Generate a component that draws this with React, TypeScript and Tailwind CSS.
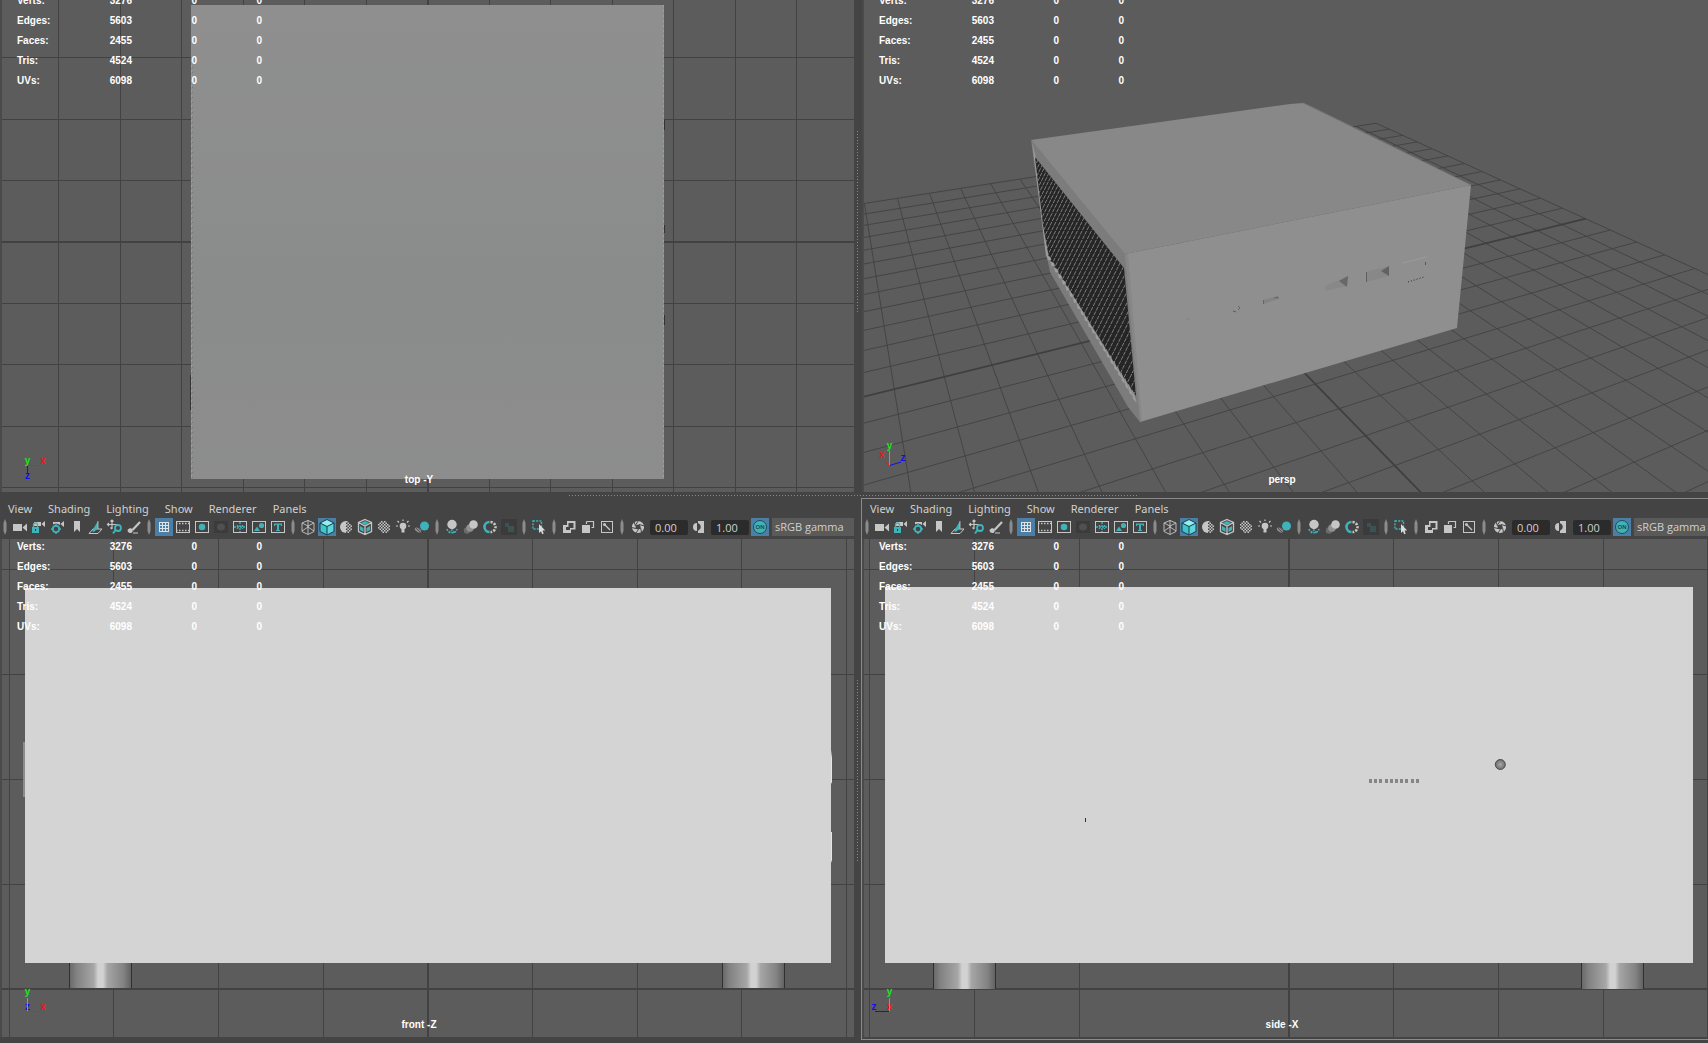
import React from "react";

const LINE = "#424242";
const GRAY = "#c6c6c6";
const TEAL = "#3fb3b9";

/* ---------- toolbar icons (18 x 18) ---------- */

function Cube({ solid, textured }: { solid?: boolean; textured?: boolean }) {
  if (solid)
    return (
      <>
        <path d="M9 1.5 16 5 9 8.5 2 5Z" fill="#8ff0f0" />
        <path d="M2 5 9 8.5V17L2 13.5Z" fill="#3fc3cc" />
        <path d="M16 5 9 8.5V17l7-3.5Z" fill="#5ad6dc" />
        <path d="M9 1.5 16 5v8.5L9 17 2 13.5V5ZM2 5l7 3.5L16 5M9 8.500V17" fill="none" stroke="#1f3b45" />
      </>
    );
  return (
    <>
      {textured && <path d="M9 3 13 5 9 7 5 5ZM4 8l3.500 2v4L4 12ZM14 8l-3.500 2v4L14 12Z" fill={TEAL} />}
      <path
        d={
          textured
            ? "M9 1.500 15.500 4.500v9L9 16.500 2.500 13.500v-9ZM2.500 4.500 9 8l6.500-3.500M9 8v8.500"
            : "M9 2.500 15 5v8.500l-6 3-6-3V5ZM3 5l6 3 6-3M9 8v8M9 2v7M3 13l6-4 6 4"
        }
        fill="none"
        stroke={GRAY}
        strokeWidth={textured ? 1.3 : 0.9}
      />
    </>
  );
}

const frame = <rect x="2.500" y="3.500" width="13" height="11" fill="none" stroke={GRAY} />;
const smallCam = <path d="M4 4h7v4H4ZM11.500 6 15 3v6Z" fill={GRAY} />;

const checks = Array.from({ length: 64 }, (_, i) => [i % 8, Math.floor(i / 8)])
  .filter(([c, r]) => (c + r) % 2 === 0 && Math.hypot(c - 3.5, r - 3.5) < 4.3)
  .map(([c, r]) => `M${3 + c * 1.5} ${3 + r * 1.5}h1.5v1.5h-1.5Z`)
  .join("");

const halfChecks = Array.from({ length: 32 }, (_, i) => [i % 4, Math.floor(i / 4)])
  .filter(([c, r]) => (c + r) % 2 === 0 && Math.hypot(c + 0.5, r - 3.5) < 4.3)
  .map(([c, r]) => `M${9 + c * 1.5} ${3 + r * 1.5}h1.5v1.5h-1.5Z`)
  .join("");

const icons: Record<string, React.ReactNode> = {
  camera: <path d="M2 6h9v7H2ZM11.500 9.500 16 5.500v8Z" fill={GRAY} />,
  lock: (
    <>
      {smallCam}
      <path d="M2 9h7v6H2Z" fill={TEAL} />
      <path d="M3.500 9V7a2 2 0 0 1 4 0v2" fill="none" stroke={TEAL} strokeWidth="1.300" />
      <path d="M5 11h1v2H5Z" fill="#333" />
    </>
  ),
  attributes: (
    <>
      {smallCam}
      <circle cx="7" cy="11" r="4.500" fill="none" stroke="#444" strokeWidth="2" />
      <circle cx="7" cy="11" r="3.200" fill="none" stroke={TEAL} strokeWidth="1.800" />
      <path d="M7 6v2M7 14v2M2 11h2M10 11h2" stroke={TEAL} strokeWidth="1.500" />
    </>
  ),
  bookmark: <path d="M6 3h6v11l-3-3-3 3Z" fill={GRAY} />,
  plane: (
    <>
      <path d="M2 15.500 6 11h9l-4 4.500Z" fill="none" stroke={GRAY} />
      <path d="M5 13 11 3v7l-4 4Z" fill={TEAL} />
      <path d="M11 3v8" stroke={GRAY} strokeWidth=".8" />
    </>
  ),
  panzoom: (
    <>
      <path d="M6 2v9M1.500 6.500H11M4.500 3.500 6 2l1.500 1.500M3 5 1.500 6.500 3 8M4.500 9.500 6 11" fill="none" stroke={GRAY} strokeWidth="1.200" />
      <circle cx="12" cy="10" r="3" fill="#444" stroke={TEAL} strokeWidth="1.800" />
      <path d="M9.500 12 7 15.500" stroke={TEAL} strokeWidth="2" />
    </>
  ),
  brush: (
    <>
      <path d="M15 4 7.500 12" stroke={GRAY} strokeWidth="2.200" />
      <path d="M2.500 12c3-4 7 0 4.500 2.500-2 1.500-4.500 0-4.500-2.500Z" fill={GRAY} />
      <path d="M8 15h5" stroke={GRAY} />
    </>
  ),
  grid: (
    <path d="M4.500 4.500h9v9h-9ZM7.500 4v10M10.500 4v10M4 7.500h10M4 10.500h10" fill="none" stroke="#e2e2e2" shapeRendering="crispEdges" />
  ),
  film: (
    <>
      <rect x="2.500" y="3.500" width="13" height="11" fill="none" stroke={GRAY} />
      <path d="M2 5.500h14M2 12.500h14" stroke={GRAY} strokeWidth="1.500" strokeDasharray="1.500 1.500" />
    </>
  ),
  gate: (
    <>
      {frame}
      <circle cx="9" cy="9" r="3.300" fill={TEAL} />
    </>
  ),
  mask: (
    <>
      <rect x="2" y="3" width="14" height="12" fill="#3b3b3b" />
      <ellipse cx="9" cy="9" rx="4" ry="3.500" fill="#505050" />
    </>
  ),
  fieldchart: (
    <>
      {frame}
      <path d="M3 9h12M9 4v10M6.500 7v4M11.500 7v4" stroke={TEAL} strokeWidth="1.400" strokeDasharray="2 1" />
    </>
  ),
  safeaction: (
    <>
      {frame}
      <circle cx="11.500" cy="7.500" r="2.600" fill={TEAL} />
      <path d="M4 13 7 8.500l3 4.500Z" fill={TEAL} />
    </>
  ),
  safetitle: (
    <>
      {frame}
      <path d="M5 5.500h8V8h-1l-.5-1.200H10V12h1v1H7v-1h1V6.800H6.500L6 8H5Z" fill={TEAL} />
    </>
  ),
  wire: <Cube />,
  solid: <Cube solid />,
  textured: <Cube textured />,
  half: (
    <>
      <path d="M9 3a6 6 0 0 0 0 12Z" fill={GRAY} />
      <path d={halfChecks} fill={GRAY} />
    </>
  ),
  checker: <path d={checks} fill={GRAY} />,
  light: (
    <>
      <circle cx="9" cy="8" r="3.300" fill={GRAY} />
      <path d="M7.500 10h3v4.500h-3Z" fill={GRAY} />
      <path d="M2 8h2M14 8h2M3.500 3 5 4.500M14.500 3 13 4.500M9 1.500V3" stroke={GRAY} strokeWidth="1.200" />
    </>
  ),
  shadow: (
    <>
      <ellipse cx="5" cy="12" rx="3.500" ry="2" fill="#8b8b8b" transform="rotate(30 5 12)" />
      <path d="M3 10l4 4M5 9.500l3 3" stroke="#555" />
      <circle cx="11.500" cy="8" r="4.500" fill={TEAL} />
    </>
  ),
  occlusion: (
    <>
      <path d="M4 11c1 5 9 5 10 0M6 15l3-3 3 3" fill="none" stroke={TEAL} strokeWidth="1.500" strokeDasharray="2 1" />
      <circle cx="9" cy="6.500" r="4.700" fill={GRAY} />
    </>
  ),
  motion: (
    <>
      <circle cx="5" cy="12.500" r="3.200" fill="#6a6a6a" />
      <circle cx="8" cy="10" r="3.800" fill="#909090" />
      <circle cx="11.500" cy="6.500" r="4.300" fill={GRAY} />
    </>
  ),
  aliasing: (
    <>
      <path d="M8.500 4a5 5 0 0 0 0 10" fill="none" stroke={TEAL} strokeWidth="2.600" />
      <path d="M9.500 4a5 5 0 0 1 0 10" fill="none" stroke={GRAY} strokeWidth="2.600" strokeDasharray="2.200 1.200" />
    </>
  ),
  dof: (
    <>
      <rect x="1" y="1" width="16" height="16" fill="#3b3b3b" />
      <path d="M5 5h4v3h5v6H8V9H5Z" fill="#3d5252" />
    </>
  ),
  isolate: (
    <>
      <rect x="3" y="3" width="8.500" height="8" fill="none" stroke={TEAL} strokeWidth="1.400" strokeDasharray="2 1.200" />
      <path d="M9 6v9l2-1.800 1.200 3 1.500-.6-1.200-3h2.700Z" fill="#dcdcdc" />
    </>
  ),
  xray: (
    <>
      <path d="M3 7h8v8H3Z" fill={GRAY} />
      <rect x="7" y="3" width="8.500" height="8.500" fill={GRAY} />
      <path d="M8.500 5h5v5h-5Z" fill="#444" />
      <path d="M6 9h4v3H6Z" fill="#444" />
    </>
  ),
  xrayjoint: (
    <>
      <path d="M7.500 3.500h7v6h-2M7.500 3.500V6" fill="none" stroke={GRAY} strokeWidth="1.200" />
      <rect x="3" y="7" width="8" height="8" fill={GRAY} />
    </>
  ),
  exposurebox: (
    <>
      <rect x="3.500" y="3.500" width="11" height="11" fill="none" stroke={GRAY} />
      <path d="M6 6l6 6" stroke={GRAY} strokeWidth="1.300" />
      <circle cx="6.500" cy="6.500" r="1.500" fill={GRAY} />
    </>
  ),
  aperture: (
    <>
      <circle cx="9" cy="9" r="4.300" fill="none" stroke={GRAY} strokeWidth="3.600" />
      <path d="M9.500 2.500 6.500 7M15.500 8 10 6.500M12.500 14.500 11.500 9.500M6.500 15.500 9.500 11.500M2.500 9.500 7 10.500M5 3.500 6.500 8" stroke="#444" strokeWidth="1" />
    </>
  ),
  contrast: (
    <>
      <path d="M7 5a4 4 0 0 0 0 8Z" fill={GRAY} />
      <path d="M8 3h6v12H8v-2.200a4 4 0 0 0 0-7.600Z" fill={GRAY} />
    </>
  ),
};

function Tool({ name, label, active }: { name: string; label: string; active?: boolean }) {
  return (
    <button
      type="button"
      aria-label={label}
      aria-pressed={active}
      className={active ? "mr-px h-[18px] w-[18px] shrink-0 bg-[#4c7fa5]" : "mr-px h-[18px] w-[18px] shrink-0"}
    >
      <svg viewBox="0 0 18 18" className="block size-full">
        {icons[name]}
      </svg>
    </button>
  );
}

function Sep() {
  return (
    <svg viewBox="0 0 11 18" className="h-[18px] w-[11px] shrink-0" aria-hidden="true">
      <path d="M5 1 6.500 5v8L5 17 3.500 13V5Z" fill="#8c8c8c" />
    </svg>
  );
}

const groups: [string, string, boolean?][][] = [
  [
    ["camera", "Select camera"],
    ["lock", "Lock camera"],
    ["attributes", "Camera attributes"],
    ["bookmark", "Bookmarks"],
    ["plane", "Image plane"],
    ["panzoom", "2D pan/zoom"],
    ["brush", "Grease pencil"],
  ],
  [
    ["grid", "Grid", true],
    ["film", "Film gate"],
    ["gate", "Resolution gate"],
    ["mask", "Gate mask"],
    ["fieldchart", "Field chart"],
    ["safeaction", "Safe action"],
    ["safetitle", "Safe title"],
  ],
  [
    ["wire", "Wireframe"],
    ["solid", "Smooth shade all", true],
    ["half", "Default material"],
    ["textured", "Wireframe on shaded"],
    ["checker", "Textured"],
    ["light", "Use all lights"],
    ["shadow", "Shadows"],
  ],
  [
    ["occlusion", "Ambient occlusion"],
    ["motion", "Motion blur"],
    ["aliasing", "Anti-aliasing"],
    ["dof", "Depth of field"],
  ],
  [["isolate", "Isolate select"]],
  [
    ["xray", "X-ray"],
    ["xrayjoint", "X-ray joints"],
    ["exposurebox", "X-ray active components"],
  ],
];

const menus = ["View", "Shading", "Lighting", "Show", "Renderer", "Panels"];

function PanelBar() {
  return (
    <header className="shrink-0 overflow-hidden pb-[3px] font-['Noto_Sans','Open_Sans',sans-serif] text-[11px] text-[#d0d0d0]">
      <nav className="flex h-[19px] items-center gap-4 pl-2">
        {menus.map((m) => (
          <button key={m} type="button" className="leading-[18px]">
            {m}
          </button>
        ))}
      </nav>
      <div className="flex h-[18px] items-center font-['Open_Sans','Noto_Sans',sans-serif]">
        {groups.map((g, i) => (
          <React.Fragment key={i}>
            <Sep />
            {g.map(([name, label, active]) => (
              <Tool key={name} name={name} label={label} active={active} />
            ))}
          </React.Fragment>
        ))}
        <Sep />
        <span className="flex pl-px">
          <Tool name="aperture" label="Exposure" />
        </span>
        <input
          aria-label="Exposure value"
          defaultValue="0.00"
          className="ml-[2px] h-[15px] w-[38px] shrink-0 rounded-xs bg-[#2b2b2b] pl-[5px] leading-[15px]"
        />
        <span className="ml-[2px] flex">
          <Tool name="contrast" label="Gamma" />
        </span>
        <input
          aria-label="Gamma value"
          defaultValue="1.00"
          className="ml-[2px] h-[15px] w-[38px] shrink-0 rounded-xs bg-[#2b2b2b] pl-[5px] leading-[15px]"
        />
        <button type="button" aria-label="View transform" aria-pressed className="ml-[2px] h-[18px] w-[18px] shrink-0 bg-[#4c7fa5]">
          <svg viewBox="0 0 18 18" className="block size-full">
            <circle cx="9" cy="9" r="6.500" fill={TEAL} stroke="#234b58" />
            <text x="9" y="11" textAnchor="middle" fontSize="6" fontWeight="700" fill="#1d4a55" fontFamily="Liberation Sans">
              ON
            </text>
          </svg>
        </button>
        <select
          aria-label="Color space"
          className="ml-[3px] h-[18px] min-w-0 flex-1 appearance-none bg-[#5a5a5a] pl-[3px] leading-[18px]"
        >
          <option>sRGB gamma</option>
        </select>
      </div>
    </header>
  );
}

/* ---------- heads-up display ---------- */

const stats: [string, number][] = [
  ["Verts:", 3276],
  ["Edges:", 5603],
  ["Faces:", 2455],
  ["Tris:", 4524],
  ["UVs:", 6098],
];

function Hud({ cut }: { cut?: boolean }) {
  return (
    <table
      className={
        "absolute left-[15px] w-[245px] table-fixed border-collapse font-['Liberation_Sans',Arial,sans-serif] text-[10px] font-bold text-white " +
        (cut ? "-top-[9px]" : "-top-[2px]")
      }
    >
      <tbody>
        {stats.map(([name, n]) => (
          <tr key={name} className="h-5 leading-5">
            <th scope="row" className="w-[50px] p-0 text-left">
              {name}
            </th>
            <td className="p-0 text-right">{n}</td>
            <td className="p-0 text-right">0</td>
            <td className="p-0 text-right">0</td>
          </tr>
        ))}
      </tbody>
    </table>
  );
}

function Viewport({
  name,
  box,
  cut,
  right,
  children,
}: {
  name: string;
  box: string;
  cut?: boolean;
  right?: boolean;
  children: React.ReactNode;
}) {
  return (
    <section aria-label={name} className="relative min-h-0 flex-1 overflow-hidden border-l-2 border-[#4a4a4a] bg-[#5c5c5c]">
      <svg viewBox={box} preserveAspectRatio="xMinYMin slice" className="absolute inset-0 size-full">
        {children}
      </svg>
      <Hud cut={cut} />
      <p
        className={
          "absolute inset-x-0 text-center font-['Liberation_Sans',Arial,sans-serif] text-[10px] leading-[14px] font-bold text-white " +
          (cut ? "bottom-[5px] " : "bottom-[5px] ") +
          (right ? "pr-2" : "pr-[18px]")
        }
      >
        {name}
      </p>
    </section>
  );
}

/* ---------- scene drawings ---------- */

function OrthoGrid({ xs, ys, axisX, axisY }: { xs: number[]; ys: number[]; axisX: number; axisY: number }) {
  return (
    <g fill={LINE} shapeRendering="crispEdges">
      {xs.map((x) => (
        <rect key={"x" + x} x={x} y="0" width={x === axisX ? 2 : 1} height="1100" />
      ))}
      {ys.map((y) => (
        <rect key={"y" + y} x="0" y={y} width="1800" height={y === axisY ? 2 : 1} />
      ))}
    </g>
  );
}

type Pt = [number, number];
const colors = { x: "#f01818", y: "#18e818", z: "#1010e8" };

function Gizmo({ origin, axes }: { origin: Pt; axes: { k: "x" | "y" | "z"; to: Pt; at: Pt }[] }) {
  return (
    <g fontFamily="Liberation Sans" fontSize="10" fontWeight="700" textAnchor="middle">
      {axes.map(({ k, to, at }) => (
        <g key={k}>
          <path d={`M${origin[0]} ${origin[1]}L${to[0]} ${to[1]}`} stroke={colors[k]} />
          <text x={at[0]} y={at[1] + 3} fill={colors[k]}>
            {k}
          </text>
        </g>
      ))}
    </g>
  );
}

function Foot({ x, y = 988 }: { x: number; y?: number }) {
  return (
    <g>
      <rect x={x} y="962" width="62" height={y - 962} fill="url(#foot)" />
      <path d={`M${x + 0.5} 962V${y}M${x + 62.5} 962V${y}`} stroke="#303030" />
    </g>
  );
}

function FootGradient() {
  return (
    <defs>
      <linearGradient id="foot">
        <stop offset="0" stopColor="#666" />
        <stop offset=".12" stopColor="#828282" />
        <stop offset=".4" stopColor="#a6a6a6" />
        <stop offset=".47" stopColor="#d2d2d2" />
        <stop offset=".55" stopColor="#d2d2d2" />
        <stop offset=".62" stopColor="#a6a6a6" />
        <stop offset=".88" stopColor="#828282" />
        <stop offset="1" stopColor="#626262" />
      </linearGradient>
    </defs>
  );
}

function TopScene() {
  return (
    <>
      <defs>
        <linearGradient id="lid" x2="0" y2="1">
          <stop offset="0" stopColor="#8f8f8f" />
          <stop offset=".6" stopColor="#8a8c8b" />
          <stop offset="1" stopColor="#8c8d8c" />
        </linearGradient>
      </defs>
      <OrthoGrid xs={[58, 120, 181, 243, 304, 366, 427, 489, 550, 612, 673, 735, 796]} ys={[57, 119, 180, 241, 303, 364, 426, 487]} axisX={427} axisY={241} />
      <rect x="191" y="5" width="473" height="474" fill="url(#lid)" />
      <path d="M191.500 60V479M663.500 5V479" stroke="#a0a0a0" strokeDasharray="2 3" />
      <path d="M192.500 62V479" stroke="#767676" strokeDasharray="1 4" />
      <path d="M190.500 375V410M664.500 120v10M664.500 225v8M664.500 315v10" stroke="#333" />
      <Gizmo
        origin={[27.5, 465.5]}
        axes={[
          { k: "x", to: [40, 465.5], at: [43, 461] },
          { k: "z", to: [27.5, 474], at: [27.5, 476] },
          { k: "y", to: [27.5, 464], at: [27.5, 461] },
        ]}
      />
    </>
  );
}

/* Ground plane: both line families meet at vanishing points on a level horizon. */
const HORIZON = -135;
const BASE = 490;
const VA = 3021;
const VB = 810;

function ground(a: number, b: number): Pt {
  const da = 485 + 120.5 * a - VA;
  const db = 1418.5 + 63.5 * b - VB;
  const t = (VA - VB) / (db - da);
  return [VB + db * t, HORIZON + (BASE - HORIZON) * t];
}

function segment(p: Pt, q: Pt) {
  return `M${p[0].toFixed(1)} ${p[1].toFixed(1)}L${q[0].toFixed(1)} ${q[1].toFixed(1)}`;
}

const steps = Array.from({ length: 25 }, (_, i) => i - 12);
const thin = steps
  .filter((i) => i !== 0)
  .map((i) => segment(ground(i, -12), ground(i, 12)) + segment(ground(-12, i), ground(12, i)))
  .join("");
const thick = segment(ground(0, -12), ground(0, 12)) + segment(ground(-12, 0), ground(12, 0));

const slats = Array.from({ length: 52 }, (_, i) => {
  const x = 908 + i * (3.2 + i * 0.03);
  return `M${x.toFixed(1)} 400L${(x + 125).toFixed(1)} 150`;
}).join("");

const teeth = Array.from({ length: 24 }, (_, i) => {
  const t = i / 24;
  const x = 1047 + t * 89;
  const y = 256 + t * 140;
  return `M${x.toFixed(1)} ${y.toFixed(1)}l1 ${(4 + t * 5).toFixed(1)} 3 ${(t * 3).toFixed(1)} -1 -3Z`;
}).join("");

function PerspScene() {
  return (
    <>
      <defs>
        <clipPath id="grille">
          <path d="M1035 157 1124 268 1136 396 1105 350 1049 258 1043 225Z" />
        </clipPath>
      </defs>
      <path d={thin} stroke={LINE} fill="none" strokeWidth=".9" />
      <path d={thick} stroke="#3f3f3f" fill="none" strokeWidth="1.800" />
      <path d="M1031 140 1125 253 1140 422 1128 407 1050 272 1047 257Z" fill="#7c7c7c" />
      <path d="M1032 142 1036 158 1049 259 1046 256Z" fill="#9a9a9a" />
      <g clipPath="url(#grille)">
        <path d="M1030 150h110v260h-110Z" fill="#252525" />
        <path d={slats} stroke="#888" strokeWidth=".9" strokeDasharray="4 1" />
      </g>
      <path d={teeth} fill="#a0a0a0" stroke="#989898" strokeWidth=".6" />
      <path d="M1031 140 1290 104 1303 103 1471 185 1125 254Z" fill="#888" />
      <path d="M1125 254 1471 185 1457 328 1140 422Z" fill="#8f8f8f" />
      <path d="M1125 254 1128 254 1142 421 1140 422Z" fill="#878787" />
      <path d="M1303 103 1312 107 1471 185" fill="none" stroke="#777" />
      <path d="M1325 286 1348 276 1347 286 1325 291Z" fill="#888" />
      <path d="M1339 281 1348 276 1347 287Z" fill="#686868" />
      <path d="M1366 272 1389 266 1389 276 1366 282Z" fill="#888" />
      <path d="M1381 271 1389 266 1389 276Z" fill="#626262" />
      <path d="M1366.500 272v10" stroke="#606060" />
      <path d="M1403 263 1426 257" stroke="#9c9c9c" />
      <path d="M1425.500 262v3" stroke="#555" />
      <path d="M1408 282 1424 277" stroke="#2c2c2c" strokeDasharray="1 2" />
      <path d="M1263 300 1278 296v3l-15 5Z" fill="#838383" />
      <path d="M1263.500 300v4M1274 298l4-1v2" stroke="#666" fill="none" />
      <path d="M1233 311l3 1M1238 306c3 2 1 3 0 4" stroke="#5c5c5c" fill="none" />
      <path d="M1186 319h4" stroke="#838383" />
      <Gizmo
        origin={[889.5, 465.5]}
        axes={[
          { k: "x", to: [884, 461], at: [882, 455] },
          { k: "z", to: [901, 462], at: [903, 458] },
          { k: "y", to: [889.5, 451], at: [889.5, 446] },
        ]}
      />
    </>
  );
}

function FrontScene() {
  return (
    <>
      <FootGradient />
      <OrthoGrid xs={[9, 113, 218, 323, 427, 532, 637, 741, 846]} ys={[569, 674, 779, 884, 988]} axisX={427} axisY={988} />
      <Foot x={69} />
      <Foot x={722} />
      <path d="M23 742h2v55h-2Z" fill="#8a8a8a" />
      <path d="M831 750l1 8v24l-1 2ZM831 832h1v28l-1 3Z" fill="#e6e6e6" />
      <rect x="25" y="588" width="806" height="375" fill="#d4d4d4" />
      <Gizmo
        origin={[27.5, 1011.5]}
        axes={[
          { k: "x", to: [41, 1011.5], at: [43, 1007] },
          { k: "z", to: [27.5, 1010], at: [27.5, 1007] },
          { k: "y", to: [27.5, 998], at: [27.5, 992] },
        ]}
      />
    </>
  );
}

function SideScene() {
  return (
    <>
      <defs>
        <radialGradient id="knob">
          <stop offset="0" stopColor="#a8a8a8" />
          <stop offset="1" stopColor="#6c6c6c" />
        </radialGradient>
      </defs>
      <OrthoGrid xs={[869, 974, 1079, 1288, 1393, 1498, 1603, 1707]} ys={[569, 674, 779, 884, 988]} axisX={1288} axisY={988} />
      <Foot x={933} y={989} />
      <Foot x={1581} y={989} />
      <rect x="885" y="587" width="808" height="376" fill="#d4d4d4" />
      <circle cx="1500.300" cy="764.500" r="5" fill="url(#knob)" stroke="#4c4c4c" />
      <g fill="#858585">
        {[1369, 1374, 1379, 1385, 1390, 1395, 1400, 1405, 1411, 1416].map((x) => (
          <rect key={x} x={x} y="779" width="3" height="4" />
        ))}
      </g>
      <rect x="1085" y="818" width="1" height="4" fill="#333" />
      <Gizmo
        origin={[889.5, 1011.5]}
        axes={[
          { k: "x", to: [889.5, 1010], at: [889.5, 1007] },
          { k: "z", to: [875, 1011.5], at: [874, 1007] },
          { k: "y", to: [889.5, 998], at: [889.5, 992] },
        ]}
      />
    </>
  );
}

/* ---------- splitters ---------- */

const dotsV = "w-px bg-[repeating-linear-gradient(to_bottom,#8a8a8a_0_1px,transparent_1px_3px)]";
const dotsH = "h-px bg-[repeating-linear-gradient(to_right,#8a8a8a_0_1px,transparent_1px_3px)]";

export default function App() {
  return (
    <main className="grid h-screen w-full grid-cols-[854fr_7px_847fr] grid-rows-[492fr_6px_545fr] overflow-hidden bg-[#444444]">
      <div className="flex min-h-0 min-w-0 flex-col">
        <Viewport name="top -Y" box="2 0 852 492" cut>
          <TopScene />
        </Viewport>
      </div>
      <div className="flex justify-center pt-[131px]">
        <div className={dotsV + " h-[183px]"} />
      </div>
      <div className="flex min-h-0 min-w-0 flex-col pl-px">
        <Viewport name="persp" box="864 0 844 492" cut right>
          <PerspScene />
        </Viewport>
      </div>

      <div className="col-span-3 flex items-center justify-center">
        <div className={dotsH + " w-1/3"} />
      </div>

      <div className="mb-[3px] flex min-h-0 min-w-0 flex-col border-y border-[#444444] pb-[2px]">
        <PanelBar />
        <Viewport name="front -Z" box="2 539 852 498">
          <FrontScene />
        </Viewport>
      </div>
      <div className="flex items-center justify-center">
        <div className={dotsV + " h-1/3"} />
      </div>
      <div className="mb-[3px] flex min-h-0 min-w-0 flex-col border-y border-l border-[#8a8a8a] pb-[2px]">
        <PanelBar />
        <Viewport name="side -X" box="864 539 844 498" right>
          <SideScene />
        </Viewport>
      </div>
    </main>
  );
}
